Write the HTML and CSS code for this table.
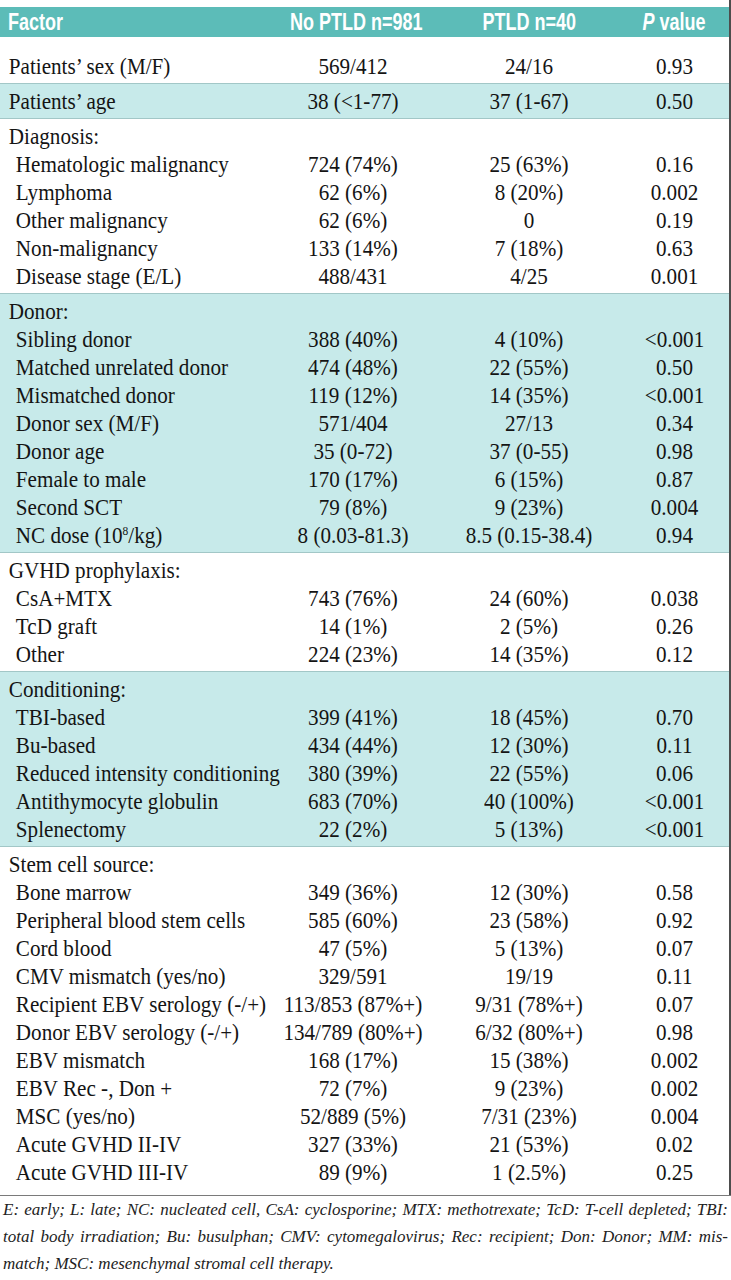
FILE: index.html
```html
<!DOCTYPE html>
<html lang="en">
<head>
<meta charset="utf-8">
<title>PTLD risk factors</title>
<link rel="stylesheet" href="styles.css">
</head>
<body>
<div class="sheet">
  <div class="head">
    <span class="h-cell h-factor"><span class="cond">Factor</span></span>
    <span class="h-cell"><span class="cond">No PTLD n=981</span></span>
    <span class="h-cell"><span class="cond">PTLD n=40</span></span>
    <span class="h-cell"><span class="cond"><i>P</i> value</span></span>
  </div>

  <div class="group first">
    <div class="row"><span class="label">Patients’ sex (M/F)</span><span>569/412</span><span>24/16</span><span>0.93</span></div>
  </div>

  <div class="group tint">
    <div class="row"><span class="label">Patients’ age</span><span>38 (&lt;1-77)</span><span>37 (1-67)</span><span>0.50</span></div>
  </div>

  <div class="group">
    <div class="row"><span class="label">Diagnosis:</span><span></span><span></span><span></span></div>
    <div class="row sub"><span class="label">Hematologic malignancy</span><span>724 (74%)</span><span>25 (63%)</span><span>0.16</span></div>
    <div class="row sub"><span class="label">Lymphoma</span><span>62 (6%)</span><span>8 (20%)</span><span>0.002</span></div>
    <div class="row sub"><span class="label">Other malignancy</span><span>62 (6%)</span><span>0</span><span>0.19</span></div>
    <div class="row sub"><span class="label">Non-malignancy</span><span>133 (14%)</span><span>7 (18%)</span><span>0.63</span></div>
    <div class="row sub"><span class="label">Disease stage (E/L)</span><span>488/431</span><span>4/25</span><span>0.001</span></div>
  </div>

  <div class="group tint">
    <div class="row"><span class="label">Donor:</span><span></span><span></span><span></span></div>
    <div class="row sub"><span class="label">Sibling donor</span><span>388 (40%)</span><span>4 (10%)</span><span>&lt;0.001</span></div>
    <div class="row sub"><span class="label">Matched unrelated donor</span><span>474 (48%)</span><span>22 (55%)</span><span>0.50</span></div>
    <div class="row sub"><span class="label">Mismatched donor</span><span>119 (12%)</span><span>14 (35%)</span><span>&lt;0.001</span></div>
    <div class="row sub"><span class="label">Donor sex (M/F)</span><span>571/404</span><span>27/13</span><span>0.34</span></div>
    <div class="row sub"><span class="label">Donor age</span><span>35 (0-72)</span><span>37 (0-55)</span><span>0.98</span></div>
    <div class="row sub"><span class="label">Female to male</span><span>170 (17%)</span><span>6 (15%)</span><span>0.87</span></div>
    <div class="row sub"><span class="label">Second SCT</span><span>79 (8%)</span><span>9 (23%)</span><span>0.004</span></div>
    <div class="row sub"><span class="label">NC dose (10<sup>8</sup>/kg)</span><span>8 (0.03-81.3)</span><span>8.5 (0.15-38.4)</span><span>0.94</span></div>
  </div>

  <div class="group">
    <div class="row"><span class="label">GVHD prophylaxis:</span><span></span><span></span><span></span></div>
    <div class="row sub"><span class="label">CsA+MTX</span><span>743 (76%)</span><span>24 (60%)</span><span>0.038</span></div>
    <div class="row sub"><span class="label">TcD graft</span><span>14 (1%)</span><span>2 (5%)</span><span>0.26</span></div>
    <div class="row sub"><span class="label">Other</span><span>224 (23%)</span><span>14 (35%)</span><span>0.12</span></div>
  </div>

  <div class="group tint">
    <div class="row"><span class="label">Conditioning:</span><span></span><span></span><span></span></div>
    <div class="row sub"><span class="label">TBI-based</span><span>399 (41%)</span><span>18 (45%)</span><span>0.70</span></div>
    <div class="row sub"><span class="label">Bu-based</span><span>434 (44%)</span><span>12 (30%)</span><span>0.11</span></div>
    <div class="row sub"><span class="label">Reduced intensity conditioning</span><span>380 (39%)</span><span>22 (55%)</span><span>0.06</span></div>
    <div class="row sub"><span class="label">Antithymocyte globulin</span><span>683 (70%)</span><span>40 (100%)</span><span>&lt;0.001</span></div>
    <div class="row sub"><span class="label">Splenectomy</span><span>22 (2%)</span><span>5 (13%)</span><span>&lt;0.001</span></div>
  </div>

  <div class="group last">
    <div class="row"><span class="label">Stem cell source:</span><span></span><span></span><span></span></div>
    <div class="row sub"><span class="label">Bone marrow</span><span>349 (36%)</span><span>12 (30%)</span><span>0.58</span></div>
    <div class="row sub"><span class="label">Peripheral blood stem cells</span><span>585 (60%)</span><span>23 (58%)</span><span>0.92</span></div>
    <div class="row sub"><span class="label">Cord blood</span><span>47 (5%)</span><span>5 (13%)</span><span>0.07</span></div>
    <div class="row sub"><span class="label">CMV mismatch (yes/no)</span><span>329/591</span><span>19/19</span><span>0.11</span></div>
    <div class="row sub"><span class="label">Recipient EBV serology (-/+)</span><span>113/853 (87%+)</span><span>9/31 (78%+)</span><span>0.07</span></div>
    <div class="row sub"><span class="label">Donor EBV serology (-/+)</span><span>134/789 (80%+)</span><span>6/32 (80%+)</span><span>0.98</span></div>
    <div class="row sub"><span class="label">EBV mismatch</span><span>168 (17%)</span><span>15 (38%)</span><span>0.002</span></div>
    <div class="row sub"><span class="label">EBV Rec -, Don +</span><span>72 (7%)</span><span>9 (23%)</span><span>0.002</span></div>
    <div class="row sub"><span class="label">MSC (yes/no)</span><span>52/889 (5%)</span><span>7/31 (23%)</span><span>0.004</span></div>
    <div class="row sub"><span class="label">Acute GVHD II-IV</span><span>327 (33%)</span><span>21 (53%)</span><span>0.02</span></div>
    <div class="row sub"><span class="label">Acute GVHD III-IV</span><span>89 (9%)</span><span>1 (2.5%)</span><span>0.25</span></div>
  </div>
</div>

<div class="footnote">
  <div class="fn-line just">E: early; L: late; NC: nucleated cell, CsA: cyclosporine; MTX: methotrexate; TcD: T-cell depleted; TBI:</div>
  <div class="fn-line just">total body irradiation; Bu: busulphan; CMV: cytomegalovirus; Rec: recipient; Don: Donor; MM: mis-</div>
  <div class="fn-line">match; MSC: mesenchymal stromal cell therapy.</div>
</div>
</body>
</html>
```

FILE: styles.css
```css
html, body {
  margin: 0;
  padding: 0;
  background: #ffffff;
}

body {
  font-family: "Liberation Serif", "Times New Roman", serif;
  color: #141414;
  width: 731px;
}

.sheet {
  width: 729px;
  border-right: 2px solid #4d4d4d;
  padding-top: 7px;
}

.head {
  display: grid;
  grid-template-columns: 268px 170px 182px 109px;
  height: 30px;
  line-height: 30px;
  background: #5cbcb8;
  color: #ffffff;
  font-family: "Liberation Sans", Arial, sans-serif;
  font-weight: bold;
  font-size: 24px;
  white-space: nowrap;
}

.h-cell {
  text-align: center;
}

.h-cell .cond {
  display: inline-block;
  transform: scaleX(0.75);
  transform-origin: center center;
}

.h-cell.h-factor {
  text-align: left;
  padding-left: 8px;
}

.h-cell.h-factor .cond {
  transform-origin: left center;
}

.group {
  padding: 3px 0;
  border-top: 1px solid #a2c7c7;
}

.group.first {
  padding-top: 15px;
  border-top: 0;
}

.group.tint {
  background: #c7eaea;
}

.group.last {
  padding-bottom: 9px;
}

.row {
  display: grid;
  grid-template-columns: 268px 170px 182px 109px;
  height: 28px;
  line-height: 28px;
  font-size: 24px;
  white-space: nowrap;
}

/* the source face is a condensed serif: narrow the glyphs */
.row > span {
  text-align: center;
  transform: scaleX(0.88);
  transform-origin: center center;
}

.row > .label {
  text-align: left;
  padding-left: 10px;
  transform-origin: left center;
}

.row.sub > .label {
  padding-left: 18px;
}

.row sup {
  font-size: 13px;
  line-height: 0;
  vertical-align: 8px;
}

.footnote {
  width: 725px;
  border-top: 1px solid #7a7a7a;
  padding: 0 3px;
  font-style: italic;
  font-size: 17px;
  line-height: 27px;
  color: #222;
}

.fn-line {
  white-space: nowrap;
}

.fn-line.just {
  text-align: justify;
  text-align-last: justify;
}
```
